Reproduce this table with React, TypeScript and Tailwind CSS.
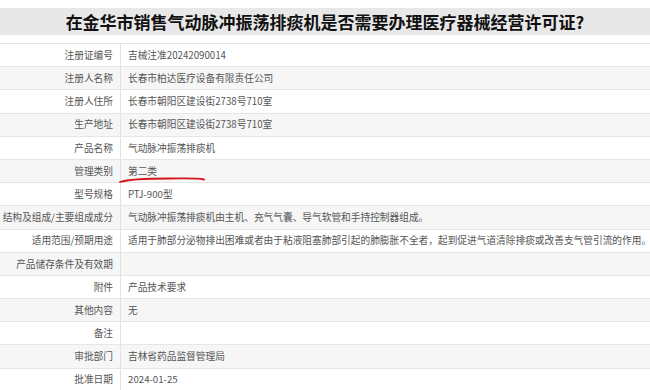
const ROWS: [string, string][] = [
  ["注册证编号", "吉械注准20242090014"],
  ["注册人名称", "长春市柏达医疗设备有限责任公司"],
  ["注册人住所", "长春市朝阳区建设街2738号710室"],
  ["生产地址", "长春市朝阳区建设街2738号710室"],
  ["产品名称", "气动脉冲振荡排痰机"],
  ["管理类别", "第二类"],
  ["型号规格", "PTJ-900型"],
  ["结构及组成/主要组成成分", "气动脉冲振荡排痰机由主机、充气气囊、导气软管和手持控制器组成。"],
  [
    "适用范围/预期用途",
    "适用于肺部分泌物排出困难或者由于粘液阻塞肺部引起的肺膨胀不全者，起到促进气道清除排痰或改善支气管引流的作用。",
  ],
  ["产品储存条件及有效期", ""],
  ["附件", "产品技术要求"],
  ["其他内容", "无"],
  ["备注", ""],
  ["审批部门", "吉林省药品监督管理局"],
  ["批准日期", "2024-01-25"],
];

export default function App() {
  return (
    <div
      className="w-[650px] h-[390px] overflow-hidden bg-white"
      style={{ fontFamily: '"Noto Sans CJK SC", "Noto Sans", sans-serif' }}
    >
      <div className="pt-[8px]">
        <h1 className="h-[27px] bg-[#e8e8e8] flex items-center justify-center text-[17px] font-bold text-[#111]">
          在金华市销售气动脉冲振荡排痰机是否需要办理医疗器械经营许可证?
        </h1>
      </div>
      <div className="mt-[8px] border-t border-[#e2e2e2]">
        {ROWS.map(([label, value], i) => (
          <div
            key={label}
            className={`relative flex h-[23.2px] border-b border-[#e6e6e6] text-[9.7px] text-[#555] ${
              i % 2 === 1 ? "bg-[#f6f6f6]" : "bg-white"
            }`}
          >
            <div className="w-[121px] shrink-0 border-r border-[#e2e2e2] pr-[7px] flex items-center justify-end whitespace-nowrap">
              {label}
            </div>
            <div className="pl-[7px] flex items-center whitespace-nowrap">{value}</div>
            {label === "管理类别" && (
              <svg
                className="absolute left-[119px] top-[14px]"
                width="88"
                height="10"
                viewBox="0 0 88 10"
              >
                <path
                  d="M1 8 C 10 5, 30 4.5, 50 4.5 S 78 4, 85 5.5"
                  stroke="#d4161b"
                  strokeWidth="1.8"
                  fill="none"
                  strokeLinecap="round"
                />
              </svg>
            )}
          </div>
        ))}
      </div>
    </div>
  );
}
